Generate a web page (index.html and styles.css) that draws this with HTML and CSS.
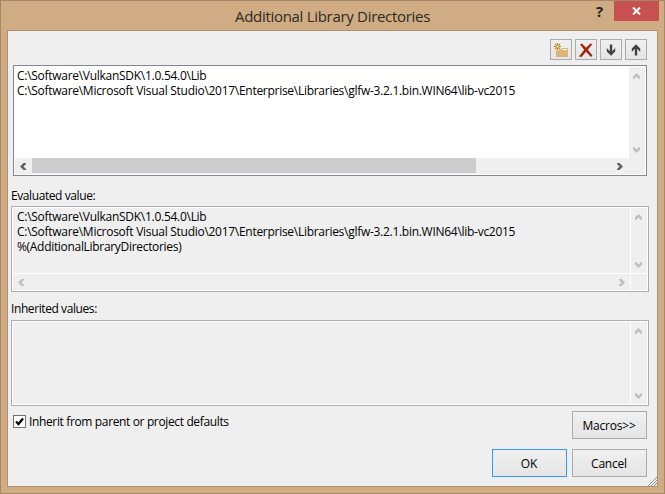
FILE: index.html
```html
<!DOCTYPE html>
<html lang="en">
<head>
<meta charset="utf-8">
<title>Additional Library Directories</title>
<link rel="stylesheet" href="styles.css">
</head>
<body>
<svg class="defs" width="0" height="0" aria-hidden="true">
  <symbol id="chevron" viewBox="0 0 9 7"><path d="M4.5 0 8 3.5V6H7L4.5 3.5 2 6H1V3.5Z"/></symbol>
</svg>
<div class="window">
  <header class="titlebar">
    <h1 class="title">Additional Library Directories</h1>
    <span class="help">?</span>
    <button class="close" aria-label="Close"><svg width="9" height="8" viewBox="0 0 9 8"><path d="M1 .5 8 7.5M8 .5 1 7.5" stroke="#fff" stroke-width="2"/></svg></button>
  </header>
  <main class="client">
    <div class="toolbar">
      <button class="tool" aria-label="New line"><svg width="20" height="19" viewBox="0 0 20 19"><path d="M5 9h5l1-1h6v9H5z" fill="#dcb679"/><path d="M11 9.5h5" stroke="#fff"/><circle cx="6.500" cy="6.500" r="3.800" fill="#f3efe8"/><path d="M6.500 3v7M3 6.500h7M4 4l5 5M9 4 4 9" stroke="#c27d1a" stroke-width="1.1"/><rect x="5.500" y="5.500" width="2" height="2" fill="#fff"/></svg></button>
      <button class="tool" aria-label="Delete"><svg width="20" height="19" viewBox="0 0 20 19"><path d="M4 4.500 6 3.500 10 7.800 14.500 3.500 16.500 4 11.800 9.800 16.500 15.500 15 17 10 11.800 5.500 17 3 16.500 8.200 9.800Z" fill="#a1260d"/></svg></button>
      <button class="tool" aria-label="Move down"><svg width="20" height="19" viewBox="0 0 20 19"><path d="M8.800 4.500h2.400v6.700L14.200 8v3.500L10 15.700l-4.200-4.200V8l3 3.200z" fill="#424242"/></svg></button>
      <button class="tool" aria-label="Move up"><svg width="20" height="19" viewBox="0 0 20 19"><path d="M8.800 15.500h2.400V8.800l3 3.200V8.500L10 4.300 5.800 8.500V12l3-3.200z" fill="#424242"/></svg></button>
    </div>
    <section class="box editor">
      <div class="lines"><p class="l1">C:\Software\VulkanSDK\1.0.54.0\Lib</p><p class="l2">C:\Software\Microsoft Visual Studio\2017\Enterprise\Libraries\glfw-3.2.1.bin.WIN64\lib-vc2015</p></div>
      <div class="vbar"><svg class="up"><use href="#chevron"/></svg><svg class="down"><use href="#chevron"/></svg></div>
      <div class="hbar active"><svg class="left"><use href="#chevron"/></svg><div class="thumb"></div><svg class="right"><use href="#chevron"/></svg></div>
      <div class="corner"></div>
    </section>
    <p class="label ev">Evaluated value:</p>
    <section class="box readonly">
      <div class="lines"><p class="l1">C:\Software\VulkanSDK\1.0.54.0\Lib</p><p class="l2">C:\Software\Microsoft Visual Studio\2017\Enterprise\Libraries\glfw-3.2.1.bin.WIN64\lib-vc2015</p><p class="l3">%(AdditionalLibraryDirectories)</p></div>
      <div class="vbar"><svg class="up"><use href="#chevron"/></svg><svg class="down"><use href="#chevron"/></svg></div>
      <div class="hbar"><svg class="left"><use href="#chevron"/></svg><svg class="right"><use href="#chevron"/></svg></div>
      <div class="corner"></div>
    </section>
    <p class="label inh">Inherited values:</p>
    <section class="box readonly plain">
      <div class="lines"></div>
      <div class="vbar"><svg class="up"><use href="#chevron"/></svg><svg class="down"><use href="#chevron"/></svg></div>
    </section>
    <div class="options">
      <div class="check"><span class="tick"><svg width="11" height="11" viewBox="0 0 11 11"><path d="M2 5.500 4.500 8 9 2.500" fill="none" stroke="#000" stroke-width="2.200"/></svg></span><span class="ck">Inherit from parent or project defaults</span></div>
      <button class="btn">Macros&gt;&gt;</button>
    </div>
    <div class="actions"><button class="btn primary">OK</button><button class="btn">Cancel</button></div>
    <svg class="grip" width="9" height="9" viewBox="0 0 9 9"><path d="M0 9 9 0M3 9 9 3M6 9 9 6" stroke="#8c8c8c"/></svg>
  </main>
</div>
</body>
</html>
```
FILE: styles.css
```css
* { box-sizing: border-box; }
body, p, h1 { margin: 0; }
body { font: 12px/15px "Open Sans", "Noto Sans", sans-serif; color: #000; overflow: hidden; }
button { font: inherit; color: inherit; padding: 0; margin: 0; border-radius: 0; }
svg { display: block; }
p, span, h1 { white-space: nowrap; }
.defs { position: absolute; }
.window { width: 665px; height: 494px; border: 1px solid #a58868; background: #cfac83; padding: 0 6px 6px; }
.titlebar { display: grid; grid-template-columns: 1fr 24px 45px; height: 29px; margin-right: -1px; align-items: start; }
.title { font-size: 15px; line-height: 30px; font-weight: 400; color: #302a24; padding-left: 228px; letter-spacing: -.3px; }
.help { font-size: 15px; line-height: 20px; font-weight: 700; color: #222; padding-left: 6px; }
.close { height: 20px; border: 0; background: #c75050; display: grid; place-items: center; }
.client { position: relative; display: flex; flex-direction: column; width: 651px; height: 457px; border: 1px solid #b09270; background: #efefef; padding: 8px 8px 0 3px; }
.toolbar { display: flex; justify-content: flex-end; gap: 3px; height: 21px; margin-right: 2px; }
.tool { width: 22px; height: 21px; border: 1px solid #acacac; background: linear-gradient(#f0f0f0, #e5e5e5); }
.box { flex: none; display: grid; border: 1px solid #abadb3; }
.editor { width: 634px; height: 111px; margin: 5px 0 0 2px; padding: 1px; background: #fff; border-color: #828790; grid-template: 1fr 16px / 1fr 16px; }
.readonly { width: 638px; height: 86px; background: #fff; padding: 1px; gap: 1px; grid-template: 1fr 16px / 1fr 16px; }
.plain { grid-template-rows: 1fr; }
.lines { overflow: hidden; padding: 1px 0 0 2px; }
.readonly .lines { padding: 1px 0 0 4px; }
.vbar, .hbar, .readonly .lines, .corner { background: #efefef; }
.vbar { display: flex; flex-direction: column; align-items: center; justify-content: space-between; padding: 6px 1px 5px 0; fill: #bfbfbf; }
.hbar { display: flex; align-items: center; justify-content: space-between; padding: 0 4px; fill: #bfbfbf; }
.active { padding: 0 5px 0 4px; fill: #606060; }
.vbar svg, .hbar svg { width: 9px; height: 7px; flex: none; }
.down { transform: rotate(180deg); }
.left { transform: rotate(-90deg); }
.right { transform: rotate(90deg); }
.thumb { width: 444px; height: 15px; background: #cdcdcd; margin: 0 auto 1px 4px; }
.label { height: 15px; }
.ev { margin: 12px 0 3px; }
.inh { margin: 9px 0 4px; }
.options { display: flex; justify-content: space-between; margin: 5px 2px 0 2px; }
.check { display: flex; gap: 3px; height: 13px; margin-top: 4px; line-height: 13px; }
.tick { width: 13px; height: 13px; border: 1px solid #707070; background: #fff; }
.btn { width: 75px; height: 28px; border: 1px solid #acacac; background: linear-gradient(#f0f0f0, #e5e5e5); }
.primary { border-color: #3399ff; }
.actions { display: flex; justify-content: flex-end; gap: 5px; margin: 10px 2px 0 0; }
.grip { position: absolute; right: 0; bottom: 0; }
.l1, .l2 { letter-spacing: -.28px; }
.l3 { letter-spacing: -.31px; }
.label { letter-spacing: -.41px; }
.ck { letter-spacing: -.36px; }
.btn { letter-spacing: -.2px; padding-right: 1px; }
```
